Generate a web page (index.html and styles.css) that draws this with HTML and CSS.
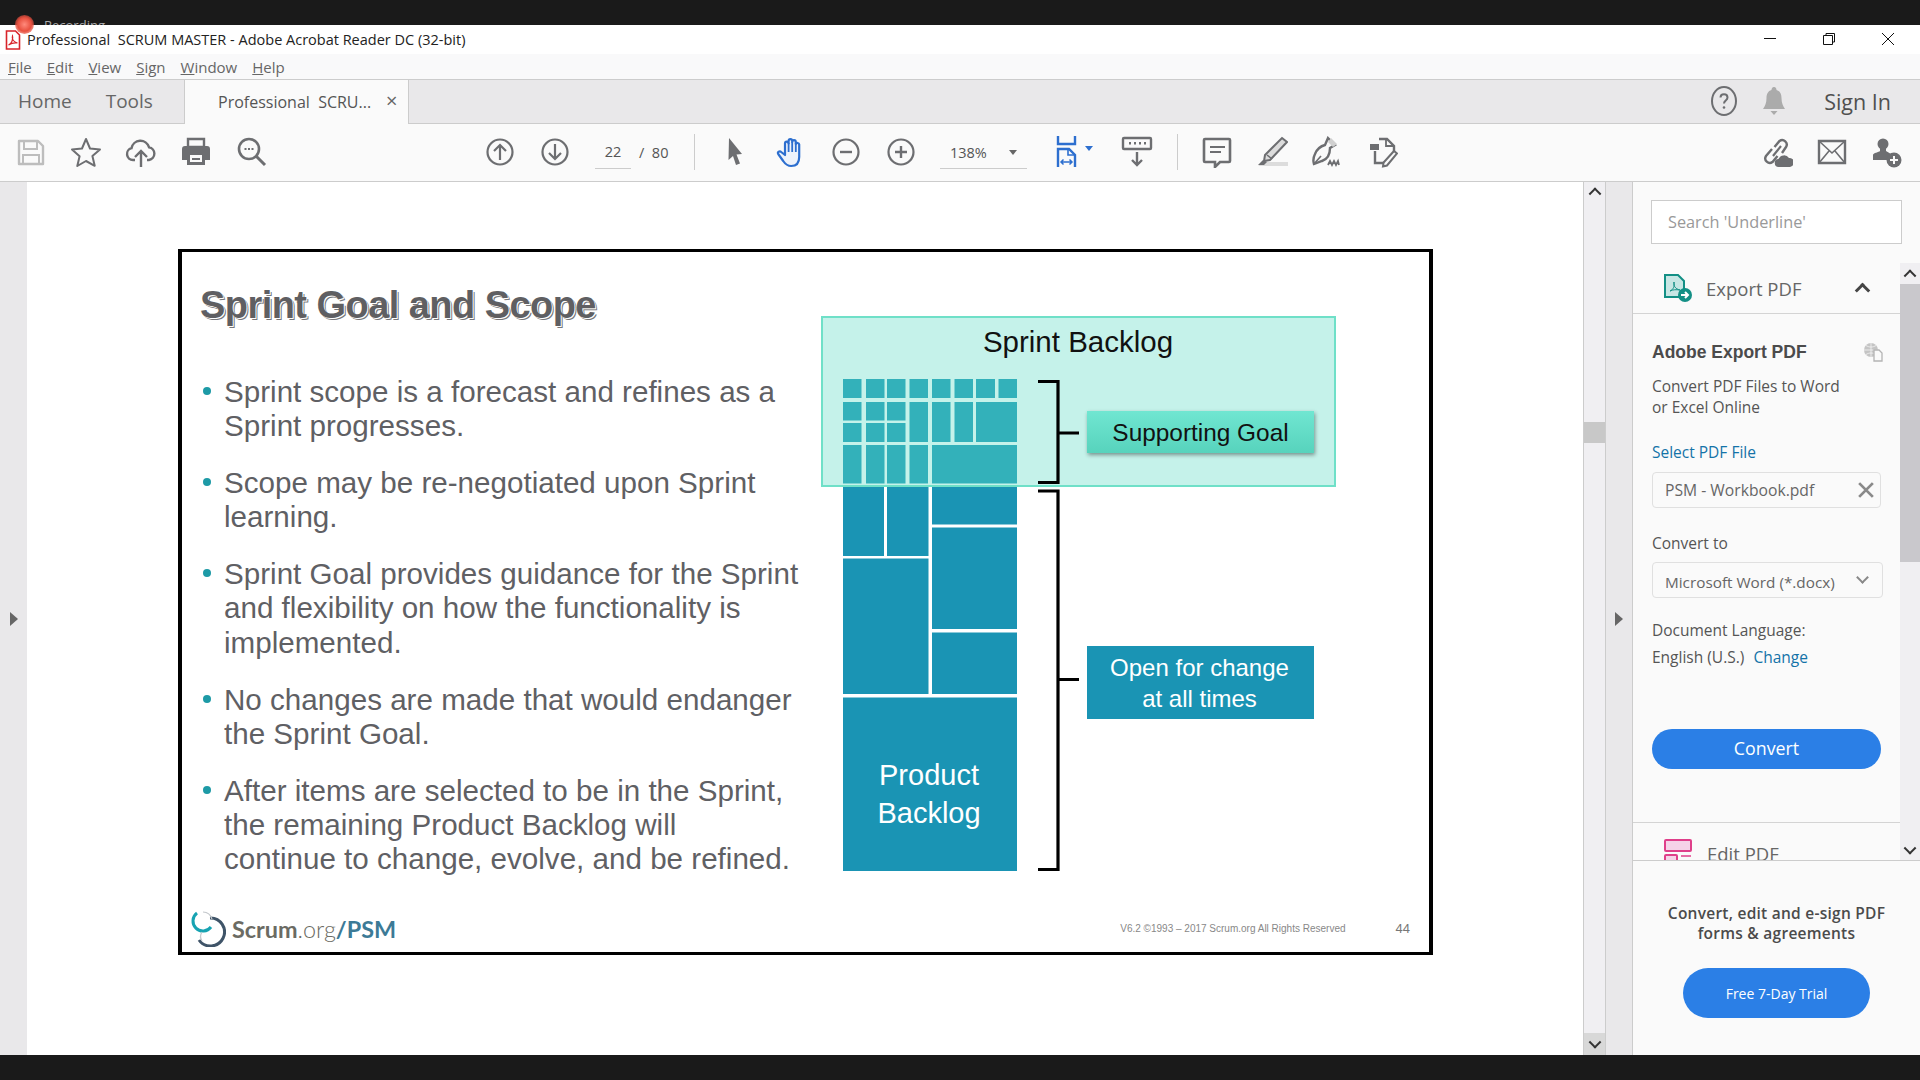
FILE: index.html
```html
<!DOCTYPE html>
<html lang="en">

<head>
    <meta charset="UTF-8">
    <title>Professional SCRUM MASTER - Adobe Acrobat Reader DC (32-bit)</title>
    <link rel="stylesheet" href="styles.css">
</head>

<body>
    <div class="rec-bar"><span class="rec-label">Recording</span></div>
    <div class="rec-dot"></div>

    <div class="title-bar">
        <svg class="pdf-icon" width="16" height="20" viewBox="0 0 16 20">
            <path d="M1.500 1h9l4 4v14h-13z" fill="#fff" stroke="#d8232a" stroke-width="1.600" />
            <path d="M3.500 15c3-1 5-6 4-9-1 3 1 6 5 7-3-.5-6 0-9 2z" fill="none" stroke="#d8232a" stroke-width="1.200" />
        </svg>
        <span class="title-text">Professional&nbsp; SCRUM MASTER - Adobe Acrobat Reader DC (32-bit)</span>
        <div class="win-controls">
            <svg width="14" height="14" viewBox="0 0 14 14"><path d="M1 6.500h12" stroke="#111" /></svg>
            <svg width="14" height="14" viewBox="0 0 14 14"><path d="M1.500 3.500h9v9h-9zM4 3.500V1.500h8.500V10h-2" fill="none" stroke="#111" /></svg>
            <svg width="14" height="14" viewBox="0 0 14 14"><path d="M1 1l12 12M13 1L1 13" stroke="#111" /></svg>
        </div>
    </div>

    <nav class="menu-bar">
        <span><u>F</u>ile</span>
        <span><u>E</u>dit</span>
        <span><u>V</u>iew</span>
        <span><u>S</u>ign</span>
        <span><u>W</u>indow</span>
        <span><u>H</u>elp</span>
    </nav>

    <div class="tab-bar">
        <span class="tab-link">Home</span>
        <span class="tab-link">Tools</span>
        <div class="doc-tab">
            <span>Professional&nbsp; SCRU...</span>
            <span class="tab-close">×</span>
        </div>
        <div class="tab-right">
            <svg width="28" height="32" viewBox="0 0 28 32">
                <ellipse cx="14" cy="16" rx="12" ry="14" fill="none" stroke="#6d6e71" stroke-width="2" />
                <path d="M10.500 12.500c0-4.500 7-4.500 7 0 0 3-3.500 3-3.500 6" fill="none" stroke="#6d6e71" stroke-width="2" />
                <circle cx="14" cy="22.500" r="1.300" fill="#6d6e71" />
            </svg>
            <svg class="bell" width="24" height="32" viewBox="0 0 24 32">
                <path d="M12 2c2 0 2.500 2 2.500 3 3.500 1 5 4 5 8 0 5 1.500 8 3.500 11H1c2-3 3.500-6 3.500-11 0-4 1.500-7 5-8 0-1 .5-3 2.500-3zM8.500 26h7L12 30z" fill="#ababab" />
            </svg>
            <span class="sign-in">Sign In</span>
        </div>
    </div>

    <div class="toolbar">
        <div class="tool-group">
            <svg class="tool" viewBox="0 0 32 32">
                <path d="M4 5h19l5 5v18H4z" fill="none" stroke="#bdbdbd" stroke-width="2.400" stroke-linejoin="round" />
                <path d="M9 5v8h13V5M8 28v-9h16v9" fill="none" stroke="#bdbdbd" stroke-width="2" />
            </svg>
            <svg class="tool" viewBox="0 0 32 32">
                <path d="M16 3l4 9.500 10 .9-7.600 6.600 2.300 9.800L16 25l-8.700 5 2.300-9.800L2 13.400l10-.9z" fill="none" stroke="#6d6e71" stroke-width="2" stroke-linejoin="round" />
            </svg>
            <svg class="tool" viewBox="0 0 32 32">
                <path d="M10 24H8a6 6 0 0 1-1.500-11.800 9 9 0 0 1 17.500-1A6.500 6.500 0 0 1 24 24h-2" fill="none" stroke="#6d6e71" stroke-width="2.400" />
                <path d="M16 31V15m-6 6 6-6 6 6" fill="none" stroke="#6d6e71" stroke-width="2.400" />
            </svg>
            <svg class="tool" viewBox="0 0 32 32">
                <path d="M8 3h16v8H8z" fill="none" stroke="#6d6e71" stroke-width="2.400" />
                <path d="M5 10h22a3 3 0 0 1 3 3v11h-5v5H7v-5H2V13a3 3 0 0 1 3-3z" fill="#6d6e71" />
                <path d="M10 19h12v7H10z" fill="#fafafa" />
                <path d="M12 22h8v2h-8z" fill="#6d6e71" />
            </svg>
            <svg class="tool" viewBox="0 0 32 32">
                <circle cx="14" cy="13" r="10" fill="none" stroke="#6d6e71" stroke-width="2.600" />
                <path d="M21 20l9 9" stroke="#6d6e71" stroke-width="3" />
                <path d="M9.500 13h2M13 13h2M16.500 13h2" stroke="#6d6e71" stroke-width="2" />
            </svg>
        </div>
        <div class="tool-group group-pages">
            <svg class="tool" viewBox="0 0 32 32">
                <circle cx="16" cy="16" r="12.500" fill="none" stroke="#6d6e71" stroke-width="2.200" />
                <path d="M16 24V9m-6 6 6-6 6 6" fill="none" stroke="#6d6e71" stroke-width="2.200" />
            </svg>
            <svg class="tool" viewBox="0 0 32 32">
                <circle cx="16" cy="16" r="12.500" fill="none" stroke="#6d6e71" stroke-width="2.200" />
                <path d="M16 8v15m-6-6 6 6 6-6" fill="none" stroke="#6d6e71" stroke-width="2.200" />
            </svg>
        </div>
        <div class="page-box">
            <span class="page-num">22</span>
            <span class="page-total">/&nbsp; 80</span>
        </div>
        <div class="tool-sep sep-first"></div>
        <div class="tool-group group-view">
            <svg class="tool" viewBox="0 0 32 32">
                <path d="M9 2l13 16-5.500.5 3.500 9-4 1.500-3-9-4.500 4z" fill="#6d6e71" />
            </svg>
            <svg class="tool" viewBox="0 0 32 32">
                <path d="M10 19V7.500a1.800 1.800 0 0 1 3.600 0V5a1.800 1.800 0 0 1 3.600 0v1a1.800 1.800 0 0 1 3.600 0v2a1.800 1.800 0 0 1 3.400.5V21c0 6-3 9-8 9-4 0-6-2-8-5l-5-7c-1.300-2 1.500-3.500 3-2z" fill="#eef3fb" stroke="#2d6fcf" stroke-width="2.200" stroke-linejoin="round" />
                <path d="M13.600 7v9M17.200 6v10M20.800 7v9" stroke="#2d6fcf" stroke-width="1.800" />
            </svg>
            <svg class="tool" viewBox="0 0 32 32">
                <circle cx="16" cy="16" r="12.500" fill="none" stroke="#6d6e71" stroke-width="2.200" />
                <path d="M10 16h12" stroke="#6d6e71" stroke-width="2.400" />
            </svg>
            <svg class="tool" viewBox="0 0 32 32">
                <circle cx="16" cy="16" r="12.500" fill="none" stroke="#6d6e71" stroke-width="2.200" />
                <path d="M10 16h12M16 10v12" stroke="#6d6e71" stroke-width="2.400" />
            </svg>
        </div>
        <div class="zoom-box">
            <span>138%</span>
            <span class="caret"></span>
        </div>
        <svg class="tool tool-fit" viewBox="0 0 32 32">
            <path d="M8 0v8h17V0" fill="none" stroke="#2d6fcf" stroke-width="2.400" />
            <path d="M8 31V13h11l6 6v12" fill="none" stroke="#2d6fcf" stroke-width="2.400" />
            <path d="M18 13v6h7" fill="none" stroke="#2d6fcf" stroke-width="1.600" />
            <path d="M11 26h11M13.500 23.500 11 26l2.500 2.500M19.500 23.500 22 26l-2.500 2.500" fill="none" stroke="#2d6fcf" stroke-width="1.500" />
        </svg>
        <span class="caret caret-blue"></span>
        <svg class="tool tool-keys" viewBox="0 0 32 32">
            <path d="M3 2h26a1 1 0 0 1 1 1v9a1 1 0 0 1-1 1H3a1 1 0 0 1-1-1V3a1 1 0 0 1 1-1z" fill="none" stroke="#6d6e71" stroke-width="2.400" />
            <path d="M8 6h2v2.500H8zM13 6h2v2.500h-2zM18 6h2v2.500h-2zM23 6h2v2.500h-2z" fill="#6d6e71" />
            <path d="M16 16v13m-5-5 5 5 5-5" fill="none" stroke="#6d6e71" stroke-width="2.400" />
        </svg>
        <div class="tool-sep sep-second"></div>
        <div class="tool-group group-edit">
            <svg class="tool" viewBox="0 0 32 32">
                <path d="M4 3h24a1 1 0 0 1 1 1v21a1 1 0 0 1-1 1h-9l-5 5v-5H4a1 1 0 0 1-1-1V4a1 1 0 0 1 1-1z" fill="#fafafa" stroke="#6d6e71" stroke-width="2.600" />
                <path d="M9 11h15M9 16h11" stroke="#6d6e71" stroke-width="1.800" />
            </svg>
            <svg class="tool" viewBox="0 0 32 32">
                <path d="M2 30h30v-4H8z" fill="#dcdcdc" />
                <path d="M26 2l5 4-17 18-6 1 1-6z" fill="#dcdcdc" stroke="#6d6e71" stroke-width="2" />
                <path d="M7 24l-5 5h6l3-3" fill="#6d6e71" />
                <path d="M11 19l5 4" stroke="#6d6e71" stroke-width="1.600" />
            </svg>
            <svg class="tool" viewBox="0 0 32 32">
                <path d="M17 2l7 7-5 3c0 5-2 11-8 13l-8 3c-1-3-1-6 1-10 2-5 6-8 10-9z" fill="none" stroke="#6d6e71" stroke-width="2.400" />
                <path d="M20 2l6 6-4 3-5-5z" fill="#d0d0d0" />
                <path d="M3 28l7-8" stroke="#6d6e71" stroke-width="1.600" />
                <path d="M17 29l2-4 2 4 2-4 2 4 2-4 1 4" fill="none" stroke="#6d6e71" stroke-width="1.800" />
            </svg>
            <svg class="tool" viewBox="0 0 32 32">
                <path d="M13 3h8l7 7v5M9 15v12h9" fill="none" stroke="#6d6e71" stroke-width="2.400" />
                <path d="M4 8h9v6H4z" fill="#6d6e71" />
                <path d="M20 3v7h8" fill="none" stroke="#6d6e71" stroke-width="1.800" />
                <path d="M28 15l3 2.500-10 12-4 1 .6-4z" fill="#fafafa" stroke="#6d6e71" stroke-width="2" />
            </svg>
        </div>
        <div class="tool-group group-share">
            <svg class="tool" viewBox="0 0 32 32">
                <path d="M11 13l-6 7a4.500 4.500 0 0 0 6.500 6l5-6M21 17l4-6A4.500 4.500 0 0 0 18.500 5l-5 6" fill="none" stroke="#6d6e71" stroke-width="2.400" />
                <path d="M12 20l8-10" stroke="#6d6e71" stroke-width="2.200" />
                <path d="M18 31a4 4 0 0 1-.5-8 6 6 0 0 1 10.500-1 4.500 4.500 0 0 1 1 9z" fill="#6d6e71" />
            </svg>
            <svg class="tool" viewBox="0 0 32 32">
                <path d="M3 5h26v22H3z" fill="none" stroke="#6d6e71" stroke-width="2.400" />
                <path d="M3 5l13 12L29 5M3 27l10-12M29 27L19 15" fill="none" stroke="#6d6e71" stroke-width="1.600" />
            </svg>
            <svg class="tool" viewBox="0 0 32 32">
                <circle cx="12" cy="8" r="5.500" fill="#6d6e71" />
                <path d="M9 12h6v3l5 3v6H2v-5c0-2 6-3 7-4z" fill="#6d6e71" />
                <circle cx="23" cy="24" r="7.500" fill="#6d6e71" />
                <path d="M19 24h8M23 20v8" stroke="#fafafa" stroke-width="2" />
            </svg>
        </div>
    </div>

    <main class="workspace">
        <aside class="left-strip"><span class="strip-arrow"></span></aside>

        <section class="doc-view">
            <div class="slide">
                <div class="slide-main">
                    <div class="slide-copy">
                        <h2 class="slide-title">Sprint Goal and Scope</h2>
                        <ul class="bullets">
                            <li>Sprint scope is a forecast and refines as a<br>Sprint progresses.</li>
                            <li>Scope may be re-negotiated upon Sprint<br>learning.</li>
                            <li>Sprint Goal provides guidance for the Sprint<br>and flexibility on how the functionality is<br>implemented.</li>
                            <li>No changes are made that would endanger<br>the Sprint Goal.</li>
                            <li>After items are selected to be in the Sprint,<br>the remaining Product Backlog will<br>continue to change, evolve, and be refined.</li>
                        </ul>
                    </div>

                    <div class="diagram">
                        <svg class="diagram-art" width="515" height="555" viewBox="821 316 515 555">
                            <rect x="822" y="317" width="513" height="169" fill="#c5f2ea" stroke="#6fe0c8" stroke-width="2" />
                            <g fill="#33b1ba">
                                <rect x="843" y="379" width="18.500" height="19" />
                                <rect x="866" y="379" width="18.500" height="19" />
                                <rect x="887" y="379" width="18.500" height="19" />
                                <rect x="909.500" y="379" width="18.500" height="19" />
                                <rect x="932" y="379" width="18.500" height="19" />
                                <rect x="954.500" y="379" width="18.500" height="19" />
                                <rect x="976" y="379" width="19" height="19" />
                                <rect x="998.500" y="379" width="18.500" height="19" />
                                <rect x="843" y="402" width="18.500" height="18.500" />
                                <rect x="866" y="402" width="18.500" height="18.500" />
                                <rect x="887" y="402" width="18.500" height="18.500" />
                                <rect x="843" y="423" width="18.500" height="19" />
                                <rect x="866" y="423" width="18.500" height="19" />
                                <rect x="887" y="423" width="18.500" height="19" />
                                <rect x="909.500" y="402" width="18.500" height="40" />
                                <rect x="932" y="402" width="18.500" height="40" />
                                <rect x="954.500" y="402" width="18.500" height="40" />
                                <rect x="976" y="402" width="41" height="40" />
                                <rect x="843" y="445" width="18.500" height="38.500" />
                                <rect x="866" y="445" width="18.500" height="38.500" />
                                <rect x="887" y="445" width="18.500" height="38.500" />
                                <rect x="909.500" y="445" width="18.500" height="38.500" />
                                <rect x="932" y="445" width="85" height="38.500" />
                            </g>
                            <g fill="#1a94b4">
                                <rect x="843" y="487" width="41" height="69" />
                                <rect x="887" y="487" width="41.500" height="69" />
                                <rect x="932" y="487" width="85" height="37.500" />
                                <rect x="932" y="527.500" width="85" height="101.500" />
                                <rect x="932" y="632.500" width="85" height="61.500" />
                                <rect x="843" y="558.500" width="85.500" height="135.500" />
                                <rect x="843" y="697.500" width="174" height="173.500" />
                            </g>
                            <g fill="none" stroke="#000" stroke-width="3.200">
                                <path d="M1038 381.500h20v101h-20M1058 433h21" />
                                <path d="M1038 491h20v378.500h-20M1058 679.500h21" />
                            </g>
                        </svg>
                        <div class="diagram-label backlog-title">Sprint Backlog</div>
                        <div class="diagram-label goal-box">Supporting Goal</div>
                        <div class="diagram-label change-box">Open for change<br>at all times</div>
                        <div class="diagram-label product-label">Product<br>Backlog</div>
                    </div>
                </div>

                <div class="slide-footer">
                    <svg class="scrum-logo" width="36" height="36" viewBox="0 0 36 36">
                        <path d="M7 2A10 10 0 1 0 21 16" fill="none" stroke="#17a3b2" stroke-width="3" />
                        <path d="M20 7A14 14 0 1 1 9 29" fill="none" stroke="#3f5468" stroke-width="3" />
                        <path d="M13 1A10 10 0 0 1 22 8M12 21A8 8 0 0 0 12 30" fill="none" stroke="#c4c8cc" stroke-width="1.200" />
                    </svg>
                    <span class="logo-text"><b>Scrum</b>.org<i>/PSM</i></span>
                    <span class="copyright">V6.2 ©1993 – 2017 Scrum.org All Rights Reserved</span>
                    <span class="slide-no">44</span>
                </div>
            </div>
        </section>

        <div class="doc-scroll">
            <span class="scroll-btn chevron-up"></span>
            <span class="doc-thumb"></span>
            <span class="scroll-btn scroll-btn-down chevron-down"></span>
        </div>

        <aside class="right-strip"><span class="strip-arrow"></span></aside>

        <aside class="side-panel">
            <div class="search-wrap">
                <div class="search-box">Search 'Underline'</div>
            </div>
            <div class="panel-scroller">
                <div class="panel-content">
                    <div class="panel-head">
                        <svg width="28" height="28" viewBox="0 0 28 28">
                            <path d="M1 1h13l6 6v16H1z" fill="#c7e6e4" stroke="#138f85" stroke-width="2" />
                            <path d="M6 17c3-1 5-5 4-9-1 3 1 7 6 8-4-.5-7-.500-10 1z" fill="none" stroke="#138f85" stroke-width="1" />
                            <circle cx="21" cy="21" r="7" fill="#138f85" />
                            <path d="M17 21h7m-3-3 3 3-3 3" fill="none" stroke="#fff" stroke-width="2" />
                        </svg>
                        <span class="panel-head-text">Export PDF</span>
                        <span class="head-chevron"></span>
                    </div>
                    <div class="export-form">
                        <div class="form-title">
                            <span>Adobe Export PDF</span>
                            <svg width="20" height="20" viewBox="0 0 20 20">
                                <circle cx="8" cy="8" r="7" fill="#c4c4c4" />
                                <path d="M1 8h14M8 1v14M3 3.500c3 2 7 2 10 0M3 12.500c3-2 7-2 10 0" fill="none" stroke="#f5f5f5" stroke-width=".8" />
                                <path d="M11 8h5l3 3v8h-8z" fill="#fafafa" stroke="#b4b4b4" stroke-width="1.300" />
                            </svg>
                        </div>
                        <p class="form-desc">Convert PDF Files to Word<br>or Excel Online</p>
                        <a class="form-link select-file">Select PDF File</a>
                        <div class="field file-field">
                            <span>PSM - Workbook.pdf</span>
                            <svg width="16" height="16" viewBox="0 0 14 14"><path d="M1 1l12 12M13 1L1 13" stroke="#8a8a8a" stroke-width="2.400" /></svg>
                        </div>
                        <div class="form-label">Convert to</div>
                        <div class="field select-field">
                            <span class="select-value">Microsoft Word (*.docx)</span>
                            <span class="select-chevron"></span>
                        </div>
                        <div class="form-label lang-label">Document Language:</div>
                        <div class="form-label lang-value">English (U.S.) <a class="form-link change-link">Change</a></div>
                        <button class="primary-btn convert-btn">Convert</button>
                    </div>
                    <div class="panel-head edit-head">
                        <svg width="28" height="28" viewBox="0 0 28 28">
                            <rect x="1" y="1" width="26" height="11" rx="1" fill="#f5d3e8" stroke="#df3f8a" stroke-width="2" />
                            <rect x="1" y="16" width="12" height="11" rx="1" fill="#f5d3e8" stroke="#df3f8a" stroke-width="2" />
                            <path d="M17 17h10" stroke="#df3f8a" stroke-width="1.500" />
                        </svg>
                        <span class="panel-head-text">Edit PDF</span>
                    </div>
                </div>
                <div class="panel-scrollbar">
                    <span class="panel-scroll-btn chevron-up"></span>
                    <span class="panel-thumb"></span>
                    <span class="panel-scroll-btn panel-scroll-down chevron-down"></span>
                </div>
            </div>
            <div class="promo">
                <p class="promo-text">Convert, edit and e-sign PDF<br>forms &amp; agreements</p>
                <button class="primary-btn trial-btn">Free 7-Day Trial</button>
            </div>
        </aside>
    </main>

    <div class="rec-bottom"></div>
</body>

</html>
```

FILE: styles.css
```css
* {
    box-sizing: border-box;
}

body {
    margin: 0;
    width: 1920px;
    height: 1080px;
    overflow: hidden;
    font-family: "Open Sans", "Noto Sans", sans-serif;
    color: #555;
    background-color: #1a1a1a;
    display: flex;
    flex-direction: column;
    position: relative;
}

/* recorder overlay */
.rec-bar {
    height: 25px;
    flex: none;
    background-color: #1a1a1a;
    overflow: hidden;
    padding: 15px 0 0 44px;
}

.rec-label {
    color: #aaa;
    font-size: 13px;
    line-height: 20px;
    display: block;
}

.rec-dot {
    position: absolute;
    left: 15px;
    top: 15px;
    width: 19px;
    height: 19px;
    border-radius: 50%;
    background: radial-gradient(circle, #ff8a7c 0, #e8503f 50%, rgba(232, 80, 63, 0.1) 100%);
}

.rec-bottom {
    height: 25px;
    flex: none;
    background-color: #1a1a1a;
}

/* window title */
.title-bar {
    height: 29px;
    flex: none;
    background-color: #fff;
    display: flex;
    align-items: center;
    padding-left: 5px;
    color: #222;
}

.title-text {
    margin-left: 6px;
    font-size: 14.500px;
}

.win-controls {
    margin-left: auto;
    display: flex;
    gap: 45px;
    padding-right: 25px;
    margin-top: -2px;
}

.menu-bar {
    height: 26px;
    flex: none;
    background-color: #f9f9fa;
    border-bottom: 1px solid #ccc;
    display: flex;
    gap: 15px;
    align-items: center;
    padding-left: 8px;
    font-size: 15px;
    color: #666;
}

.tab-bar {
    height: 44px;
    flex: none;
    background-color: #e9e8ea;
    border-bottom: 1px solid #ccc;
    display: flex;
    align-items: center;
    padding: 0 0 2px 18px;
    font-size: 19px;
}

.tab-link {
    margin-right: 34px;
    color: #666;
}

.doc-tab {
    position: absolute;
    left: 184px;
    top: 80px;
    width: 225px;
    height: 44px;
    background-color: #fafafa;
    border-left: 1px solid #ccc;
    border-right: 1px solid #ccc;
    display: flex;
    align-items: center;
    padding-left: 33px;
    font-size: 16px;
    color: #555;
}

.tab-close {
    position: absolute;
    left: 201px;
    top: 7px;
    font-size: 20px;
    color: #666;
}

.tab-right {
    margin-left: auto;
    display: flex;
    align-items: center;
    padding-right: 29px;
}

.bell {
    margin-left: 24px;
}

.sign-in {
    margin-left: 38px;
    font-size: 21.500px;
    font-weight: 500;
    color: #505050;
    padding-top: 2px;
}

/* toolbar */
.toolbar {
    height: 58px;
    flex: none;
    background-color: #fafafa;
    border-bottom: 1px solid #ccc;
    display: flex;
    align-items: center;
    padding: 0 17px 2px 15px;
}

.tool-group {
    display: flex;
    gap: 23px;
}

.tool {
    width: 32px;
    height: 32px;
    flex: none;
}

.group-pages {
    margin-left: 217px;
}

.page-box {
    margin-left: 24px;
    width: 77px;
    display: flex;
    align-items: center;
    font-size: 14.500px;
    color: #555;
}

.page-num {
    width: 36px;
    height: 33px;
    line-height: 32px;
    text-align: center;
    border-bottom: 1px solid #ccc;
    margin-top: 2px;
}

.page-total {
    margin-left: 8px;
    margin-top: 1px;
}

.tool-sep {
    width: 1px;
    height: 36px;
    background-color: #ccc;
}

.sep-first {
    margin-left: 22px;
}

.group-view {
    margin-left: 25px;
}

.zoom-box {
    margin-left: 23px;
    width: 87px;
    height: 33px;
    margin-top: 2px;
    border-bottom: 1px solid #ccc;
    display: flex;
    align-items: center;
    padding-left: 10px;
    font-size: 14.500px;
    position: relative;
}

.caret {
    width: 0;
    height: 0;
    border-left: 4px solid transparent;
    border-right: 4px solid transparent;
    border-top: 5px solid #666;
    position: absolute;
    left: 69px;
    top: 14px;
}

.tool-fit {
    margin-left: 23px;
}

.caret-blue {
    position: static;
    border-top-color: #2d6fcf;
    margin: -6px 0 0 3px;
}

.tool-keys {
    margin-left: 28px;
}

.sep-second {
    margin-left: 24px;
}

.group-edit {
    margin-left: 23px;
}

.group-share {
    margin-left: auto;
}

/* main area */
.workspace {
    flex: 1;
    min-height: 0;
    display: flex;
}

.left-strip {
    width: 27px;
    flex: none;
    background-color: #e9e8ea;
    display: flex;
    align-items: center;
    justify-content: center;
}

.strip-arrow {
    width: 0;
    height: 0;
    border-top: 7px solid transparent;
    border-bottom: 7px solid transparent;
    border-left: 8px solid #666;
}

.doc-view {
    flex: 1;
    min-width: 0;
    background-color: #fff;
    padding: 67px 0 0 151px;
}

.slide {
    width: 1255px;
    height: 706px;
    border: 4px solid #000;
    border-top-width: 3px;
    border-bottom-width: 3px;
    display: flex;
    flex-direction: column;
}

.slide-main {
    flex: 1;
    display: flex;
    min-height: 0;
}

.slide-copy {
    width: 639px;
    flex: none;
    padding: 31px 0 0 18px;
    font-family: "Liberation Sans", Arial, sans-serif;
    color: #5f6064;
}

.slide-title {
    margin: 0;
    font-size: 38px;
    line-height: 44px;
    font-weight: 700;
    color: #5f5f62;
    text-shadow: 1px 1px 0 #fff, 2px 2px 0 #77777a;
    letter-spacing: -0.55px;
}

.bullets {
    list-style: none;
    margin: 48px 0 0;
    padding: 0 0 0 24px;
    font-size: 29.600px;
    line-height: 34.300px;
}

.bullets li {
    position: relative;
    margin-bottom: 22.500px;
    white-space: nowrap;
}

.bullets li::before {
    content: "";
    position: absolute;
    left: -21px;
    top: 12px;
    width: 8px;
    height: 8px;
    border-radius: 50%;
    background-color: #1d9aa6;
}

.diagram {
    position: relative;
    width: 515px;
    height: 555px;
    margin-top: 64px;
    font-family: "Liberation Sans", Arial, sans-serif;
}

.diagram-art {
    display: block;
}

.diagram-label {
    position: absolute;
    text-align: center;
}

.backlog-title {
    left: 0;
    width: 514px;
    top: 8px;
    font-size: 29.500px;
    line-height: 36px;
    color: #111;
}

.goal-box {
    left: 266px;
    top: 95px;
    width: 227px;
    height: 42px;
    line-height: 44px;
    font-size: 24.400px;
    color: #111;
    background: linear-gradient(#70e6d1, #57d3bc);
    box-shadow: 1px 2px 4px rgba(0, 0, 0, 0.4);
}

.change-box {
    left: 266px;
    top: 330px;
    width: 227px;
    height: 73px;
    padding: 6px 2px 0 0;
    font-size: 24px;
    line-height: 31px;
    color: #fff;
    background-color: #1a94b4;
}

.product-label {
    left: 21px;
    width: 174px;
    top: 440px;
    font-size: 29px;
    line-height: 38px;
    color: #fff;
}

.slide-footer {
    height: 49px;
    flex: none;
    display: flex;
    align-items: center;
    padding: 2px 19px 0 8px;
    font-family: "Liberation Sans", Arial, sans-serif;
}

.logo-text {
    margin-left: 6px;
    font-family: "Lato", sans-serif;
    font-size: 23.400px;
    color: #6b6b63;
    font-weight: 300;
}

.logo-text b {
    font-weight: 700;
}

.logo-text i {
    font-style: normal;
    font-weight: 700;
    color: #3c7a96;
}

.copyright {
    margin-left: auto;
    font-size: 10px;
    color: #888;
}

.slide-no {
    margin-left: 50px;
    font-size: 13px;
    color: #777;
}

.doc-scroll {
    width: 23px;
    flex: none;
    background-color: #f0eff2;
    border-left: 1px solid #ccc;
    border-right: 1px solid #ccc;
    position: relative;
}

.scroll-btn {
    position: absolute;
    left: 0;
    top: 0;
    width: 21px;
    height: 20px;
}

.scroll-btn-down {
    top: auto;
    bottom: 0;
    height: 22px;
    background-color: #d8d8d8;
}

.doc-thumb {
    position: absolute;
    left: 0;
    top: 240px;
    width: 21px;
    height: 21px;
    background-color: #c8c8c8;
}

.chevron-up::after,
.chevron-down::after {
    content: "";
    position: absolute;
    left: 50%;
    top: 50%;
    width: 7px;
    height: 7px;
    border-left: 2px solid #333;
    border-top: 2px solid #333;
    transform: translate(-50%, -30%) rotate(45deg);
}

.chevron-down::after {
    transform: translate(-50%, -70%) rotate(225deg);
}

.right-strip {
    width: 27px;
    flex: none;
    background-color: #e9e8ea;
    border-right: 1px solid #ccc;
    display: flex;
    align-items: center;
    justify-content: center;
}

/* right panel */
.side-panel {
    width: 287px;
    flex: none;
    background-color: #fafafa;
    display: flex;
    flex-direction: column;
    font-size: 14px;
}

.search-wrap {
    height: 81px;
    flex: none;
    padding: 18px 18px 0 18px;
}

.search-box {
    height: 44px;
    width: 251px;
    background-color: #fff;
    border: 1px solid #ccc;
    padding-left: 16px;
    line-height: 42px;
    font-size: 16.300px;
    color: #999;
}

.panel-scroller {
    height: 597px;
    flex: none;
    display: flex;
}

.panel-content {
    flex: 1;
    min-width: 0;
    overflow: hidden;
}

.panel-head {
    height: 51px;
    border-bottom: 1px solid #d4d4d4;
    display: flex;
    align-items: center;
    padding-left: 31px;
}

.panel-head-text {
    margin-left: 14px;
    font-size: 18.500px;
    color: #666;
}

.head-chevron {
    margin-left: 56px;
    margin-top: 4px;
    width: 11px;
    height: 11px;
    border-left: 3px solid #444;
    border-top: 3px solid #444;
    transform: rotate(45deg);
}

.export-form {
    padding: 27px 16px 0 19px;
    height: 509px;
    border-bottom: 1px solid #d4d4d4;
}

.form-title {
    display: flex;
    align-items: center;
    justify-content: space-between;
    height: 22px;
    font-family: "Liberation Sans", Arial, sans-serif;
    font-size: 17.500px;
    font-weight: 700;
    color: #4b4b4b;
    padding-right: 1px;
}

.form-desc {
    margin: 13px 0 0;
    font-size: 15.500px;
    line-height: 21px;
    color: #555;
}

.form-link {
    color: #1473a8;
}

.select-file {
    display: block;
    margin-top: 24px;
    line-height: 20px;
    font-size: 15.500px;
}

.field {
    width: 229px;
    height: 36px;
    margin-top: 10px;
    border: 1px solid #e0e0e0;
    border-radius: 4px;
    display: flex;
    align-items: center;
    justify-content: space-between;
    padding: 0 6px 0 12px;
    font-size: 15.700px;
    color: #666;
}

.form-label {
    margin-top: 25px;
    line-height: 20px;
    font-size: 15.500px;
    color: #555;
}

.select-field {
    width: 231px;
    margin-top: 9px;
    padding-right: 15px;
    font-size: 15.300px;
}

.select-value {
    margin-top: 3px;
}

.select-chevron {
    width: 9px;
    height: 9px;
    border-right: 2px solid #888;
    border-bottom: 2px solid #888;
    transform: rotate(45deg);
    margin-top: -6px;
}

.lang-label {
    margin-top: 22px;
}

.lang-value {
    margin-top: 7px;
}

.change-link {
    margin-left: 5px;
}

.primary-btn {
    display: block;
    border: none;
    border-radius: 25px;
    background-color: #2b7fe6;
    color: #fff;
    font-family: inherit;
    text-align: center;
}

.convert-btn {
    width: 229px;
    height: 40px;
    margin-top: 62px;
    padding-bottom: 3px;
    font-size: 17.800px;
}

.edit-head {
    border-bottom: none;
    align-items: flex-start;
    padding-top: 16px;
}

.edit-head .panel-head-text {
    margin-top: 2px;
    margin-left: 15px;
}

.panel-scrollbar {
    width: 20px;
    flex: none;
    background-color: #f0eff2;
    position: relative;
}

.panel-scroll-btn {
    position: absolute;
    left: 0;
    top: 0;
    width: 20px;
    height: 21px;
}

.panel-scroll-down {
    top: auto;
    bottom: 0;
}

.panel-thumb {
    position: absolute;
    left: 0;
    top: 21px;
    width: 20px;
    height: 278px;
    background-color: #c9c8cc;
}

.promo {
    flex: 1;
    border-top: 1px solid #ccc;
    text-align: center;
    padding-top: 42px;
}

.promo-text {
    margin: 0;
    font-size: 15.500px;
    letter-spacing: 0.25px;
    line-height: 20px;
    font-weight: 600;
    color: #4b4b4b;
}

.trial-btn {
    width: 187px;
    height: 50px;
    margin: 25px 0 0 50px;
    font-size: 14px;
}
```
